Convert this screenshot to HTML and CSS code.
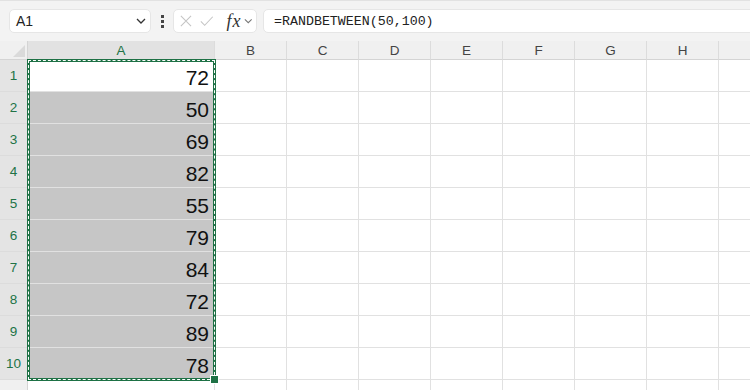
FILE: index.html
```html
<!DOCTYPE html>
<html lang="en">

<head>
    <meta charset="UTF-8">
    <meta name="viewport" content="width=device-width, initial-scale=1.0">
    <title>RANDBETWEEN</title>
    <link rel="stylesheet" href="styles.css">
</head>

<body>
    <div class="toolbar">
        <div class="box name-box">
            <span>A1</span>
            <svg class="chevron" width="10" height="6" viewBox="0 0 10 6"><path d="M1 1l4 4 4-4" fill="none" stroke="#333" stroke-width="1.3"/></svg>
        </div>
        <div class="dots"><i></i><i></i><i></i></div>
        <div class="box fx-box">
            <svg width="14" height="14" viewBox="0 0 14 14"><path d="M1 1l12 12M13 1L1 13" stroke="#c4c4c4" stroke-width="1.2"/></svg>
            <svg width="16" height="14" viewBox="0 0 16 14"><path d="M1 7.5l4.5 4.5L15 2" fill="none" stroke="#c4c4c4" stroke-width="1.2"/></svg>
            <span class="fx">fx</span>
            <svg class="chevron" width="10" height="6" viewBox="0 0 10 6"><path d="M1 1l4 4 4-4" fill="none" stroke="#777" stroke-width="1.2"/></svg>
        </div>
        <div class="box formula-box">=RANDBETWEEN(50,100)</div>
    </div>

    <div class="sheet">
        <div class="corner"></div>
        <div class="col-head active">A</div>
        <div class="col-head">B</div>
        <div class="col-head">C</div>
        <div class="col-head">D</div>
        <div class="col-head">E</div>
        <div class="col-head">F</div>
        <div class="col-head">G</div>
        <div class="col-head">H</div>
        <div class="col-head"></div>

        <div id="rows" class="rows"></div>

        <div class="marquee"><span class="handle"></span></div>
    </div>

    <script>
        const values = [72, 50, 69, 82, 55, 79, 84, 72, 89, 78];
        const rows = document.getElementById('rows');

        for (let r = 1; r <= 11; r++) {
            const head = document.createElement('div');
            head.className = r <= 10 ? 'row-head active' : 'row-head';
            head.innerText = r;
            rows.appendChild(head);

            for (let c = 0; c < 9; c++) {
                const cell = document.createElement('div');
                cell.className = 'cell';
                if (c === 0 && r <= 10) {
                    cell.className += r === 1 ? ' current' : ' selected';
                    cell.innerText = values[r - 1];
                }
                rows.appendChild(cell);
            }
        }
    </script>
</body>

</html>
```

FILE: styles.css
```css
body {
    margin: 0;
    width: 750px;
    height: 390px;
    overflow: hidden;
    background: #ffffff;
    font-family: 'Liberation Sans', Arial, sans-serif;
    color: #222;
}

.toolbar {
    display: flex;
    align-items: center;
    height: 41px;
    width: 770px;
    box-sizing: border-box;
    padding: 0 0 0 9px;
    background: #f3f3f3;
    border-top: 1px solid #e2e2e2;
}

.box {
    height: 24px;
    box-sizing: border-box;
    background: #ffffff;
    border: 1px solid #e6e6e6;
    border-radius: 5px;
    display: flex;
    align-items: center;
}

.name-box {
    width: 142px;
    padding: 0 4px 0 6px;
    justify-content: space-between;
    font-size: 14px;
}

.dots {
    width: 22px;
    display: flex;
    flex-direction: column;
    align-items: center;
    gap: 2px;
}

.dots i {
    width: 3px;
    height: 3px;
    background: #444;
}

.fx-box {
    width: 84px;
    padding: 0 4px 0 6px;
    gap: 8px;
}

.fx {
    font-family: 'Liberation Serif', 'Times New Roman', serif;
    font-style: italic;
    font-size: 18px;
    color: #333;
    margin-left: 5px;
    margin-right: -6px;
    letter-spacing: 1px;
}

.formula-box {
    flex: 1;
    margin-left: 6px;
    padding-left: 10px;
    font-family: 'Liberation Mono', 'Courier New', monospace;
    font-size: 13.3px;
    color: #222;
}

.sheet {
    position: relative;
    display: grid;
    grid-template-columns: 28px 187px repeat(8, 72px);
    grid-template-rows: 19px;
    width: 800px;
}

.corner {
    background: #f0f0f0;
    border-right: 1px solid #d4d4d4;
    border-bottom: 1px solid #d4d4d4;
    position: relative;
}

.corner::after {
    content: '';
    position: absolute;
    right: 2px;
    bottom: 2px;
    border-left: 12px solid transparent;
    border-bottom: 12px solid #dadada;
}

.col-head {
    background: #f0f0f0;
    border-right: 1px solid #dcdcdc;
    border-bottom: 1px solid #d4d4d4;
    font-size: 13.5px;
    color: #444;
    display: flex;
    align-items: center;
    justify-content: center;
}

.col-head.active {
    background: #e2e2e2;
    color: #217346;
}

.rows {
    grid-column: 1 / -1;
    display: grid;
    grid-template-columns: subgrid;
    grid-auto-rows: 32px;
}

.row-head {
    background: #f0f0f0;
    border-right: 1px solid #d4d4d4;
    border-bottom: 1px solid #dcdcdc;
    font-size: 13.5px;
    color: #777;
    display: flex;
    align-items: center;
    justify-content: center;
}

.row-head.active {
    background: #e4e4e4;
    color: #217346;
}

.cell {
    box-sizing: border-box;
    border-right: 1px solid #e1e1e1;
    border-bottom: 1px solid #e1e1e1;
    font-size: 21px;
    line-height: 24px;
    color: #111;
    display: flex;
    align-items: flex-end;
    justify-content: flex-end;
    padding: 0 5px 1px 0;
}

.cell.selected {
    background: #c6c6c6;
}

.marquee {
    position: absolute;
    left: 27px;
    top: 18px;
    width: 183px;
    height: 316px;
    border: 3px solid #1e7145;
}

.marquee::after {
    content: '';
    position: absolute;
    inset: -2px;
    border: 1px dashed #ffffff;
}

.handle {
    position: absolute;
    right: -6px;
    bottom: -6px;
    width: 7px;
    height: 7px;
    background: #1e7145;
    border: 1px solid #ffffff;
    z-index: 1;
}
```
